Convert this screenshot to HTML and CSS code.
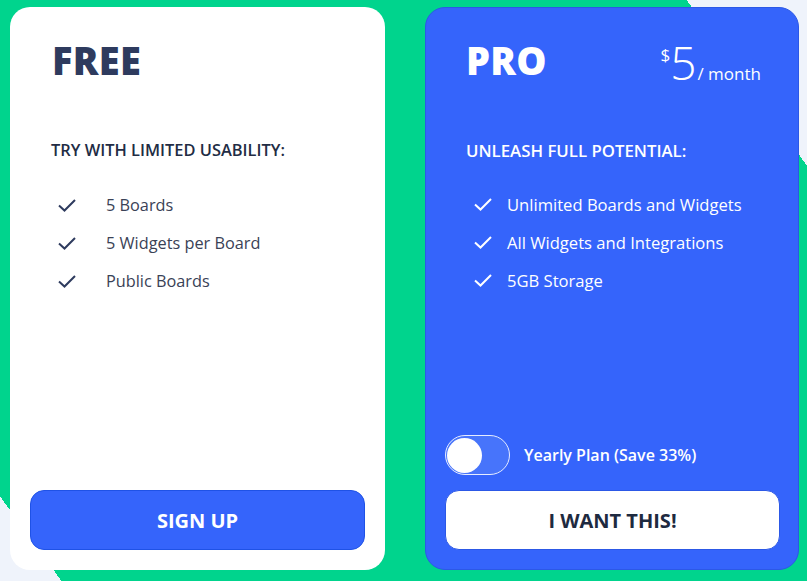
FILE: index.html
```html
<!DOCTYPE html>
<html>
<head>
  <link rel="stylesheet" href="styles.css">
</head>
<body>
<div class="plans">

  <!-- Free plan -->
  <div class="card card-free">
    <div class="card-head">
      <h1 class="plan-name">FREE</h1>
    </div>
    <h2 class="plan-sub">TRY WITH LIMITED USABILITY:</h2>
    <ul class="features">
      <li><svg class="check" viewBox="0 0 18 13"><polyline points="1,6.5 6.5,11.5 17,1"/></svg><span>5 Boards</span></li>
      <li><svg class="check" viewBox="0 0 18 13"><polyline points="1,6.5 6.5,11.5 17,1"/></svg><span>5 Widgets per Board</span></li>
      <li><svg class="check" viewBox="0 0 18 13"><polyline points="1,6.5 6.5,11.5 17,1"/></svg><span>Public Boards</span></li>
    </ul>
    <div class="card-foot">
      <button class="btn btn-blue">SIGN UP</button>
    </div>
  </div>

  <!-- Pro plan -->
  <div class="card card-pro">
    <div class="card-head">
      <h1 class="plan-name">PRO</h1>
      <div class="price"><span class="cur">$</span><span class="amount">5</span><span class="per">/ month</span></div>
    </div>
    <h2 class="plan-sub">UNLEASH FULL POTENTIAL:</h2>
    <ul class="features">
      <li><svg class="check" viewBox="0 0 18 13"><polyline points="1,6.5 6.5,11.5 17,1"/></svg><span>Unlimited Boards and Widgets</span></li>
      <li><svg class="check" viewBox="0 0 18 13"><polyline points="1,6.5 6.5,11.5 17,1"/></svg><span>All Widgets and Integrations</span></li>
      <li><svg class="check" viewBox="0 0 18 13"><polyline points="1,6.5 6.5,11.5 17,1"/></svg><span>5GB Storage</span></li>
    </ul>
    <div class="card-foot">
      <label class="yearly">
        <span class="toggle"><span class="knob"></span></span>
        <span class="yearly-text">Yearly Plan (Save 33%)</span>
      </label>
      <button class="btn btn-white">I WANT THIS!</button>
    </div>
  </div>

</div>
</body>
</html>
```

FILE: styles.css
```css
* {
  margin: 0;
  padding: 0;
  box-sizing: border-box;
}

html, body {
  height: 100%;
}

/* green band with light corners */
body {
  font-family: "Open Sans", "Noto Sans", sans-serif;
  background: linear-gradient(54deg, #eff3fb 5%, #00d48d 5%, #00d48d 90.2%, #eff3fb 90.2%);
  padding: 7px 8px 11px 10px;
}

.plans {
  display: flex;
  gap: 40px;
  height: 100%;
}

.card {
  flex: 1;
  display: flex;
  flex-direction: column;
  border-radius: 20px;
  padding: 0 20px 20px 20px;
}

.card-free {
  flex: 0 0 375px;
  background-color: #fff;
}

.card-pro {
  background-color: #3564fb;
  border: 1px solid #2c58e6;
  color: #fff;
  padding: 0 18px 19px 19px;
}

.card-head {
  display: flex;
  justify-content: space-between;
  align-items: flex-start;
  padding: 34px 19px 0 22px;
  height: 96px;
}

.card-pro .card-head {
  padding-top: 33px;
  padding-left: 21px;
}

.plan-name {
  font-size: 38px;
  line-height: 1;
  font-weight: 800;
  letter-spacing: 0.3px;
  color: #2e3b5e;
}

.card-pro .plan-name {
  color: #fff;
}

.price {
  display: flex;
  align-items: baseline;
  margin-top: -2px;
  line-height: 1;
}

.price .cur {
  align-self: flex-start;
  font-size: 17px;
  font-weight: 400;
  margin-top: 7px;
}

.price .amount {
  font-size: 46px;
  font-weight: 300;
}

.price .per {
  font-size: 17px;
  font-weight: 400;
  margin-left: 1px;
}

.plan-sub {
  font-size: 16.4px;
  font-weight: 600;
  color: #222c44;
  padding-left: 21px;
  margin-top: 36px;
  line-height: 22px;
}

.card-pro .plan-sub {
  font-size: 16.8px;
  color: #fff;
  padding-left: 21px;
}

.features {
  list-style: none;
  margin-top: 25px;
  padding-left: 28px;
}

.card-pro .features {
  margin-top: 23px;
  padding-left: 29px;
}

.features li {
  display: flex;
  align-items: center;
  height: 38px;
  font-size: 16.3px;
  color: #3a4256;
}

.card-pro .features li {
  font-size: 16.6px;
  color: #fff;
}

.check {
  width: 18px;
  height: 13px;
  fill: none;
  stroke: #2e3b5e;
  stroke-width: 2;
  margin-right: 30px;
  flex-shrink: 0;
}

.card-pro .check {
  stroke: #fff;
  margin-right: 15px;
}

.card-foot {
  margin-top: auto;
}

.yearly {
  display: flex;
  align-items: center;
  margin-bottom: 15px;
}

.toggle {
  width: 65px;
  height: 40px;
  border: 1.5px solid #e6ecff;
  border-radius: 20px;
  background-color: #4774fb;
  padding: 1px;
  display: flex;
  align-items: center;
}

.knob {
  width: 35px;
  height: 35px;
  border-radius: 50%;
  background-color: #fff;
}

.yearly-text {
  font-size: 16px;
  font-weight: 600;
  margin-left: 14px;
}

.btn {
  display: block;
  width: 100%;
  height: 60px;
  border-radius: 14px;
  font-family: "Open Sans", "Noto Sans", sans-serif;
  font-size: 20px;
  font-weight: 700;
  cursor: pointer;
}

.btn-blue {
  background-color: #3564fb;
  border: 1px solid #1f52e6;
  color: #fff;
}

.btn-white {
  background-color: #fff;
  border: 1px solid #2c58e6;
  color: #1e2a40;
}
```
